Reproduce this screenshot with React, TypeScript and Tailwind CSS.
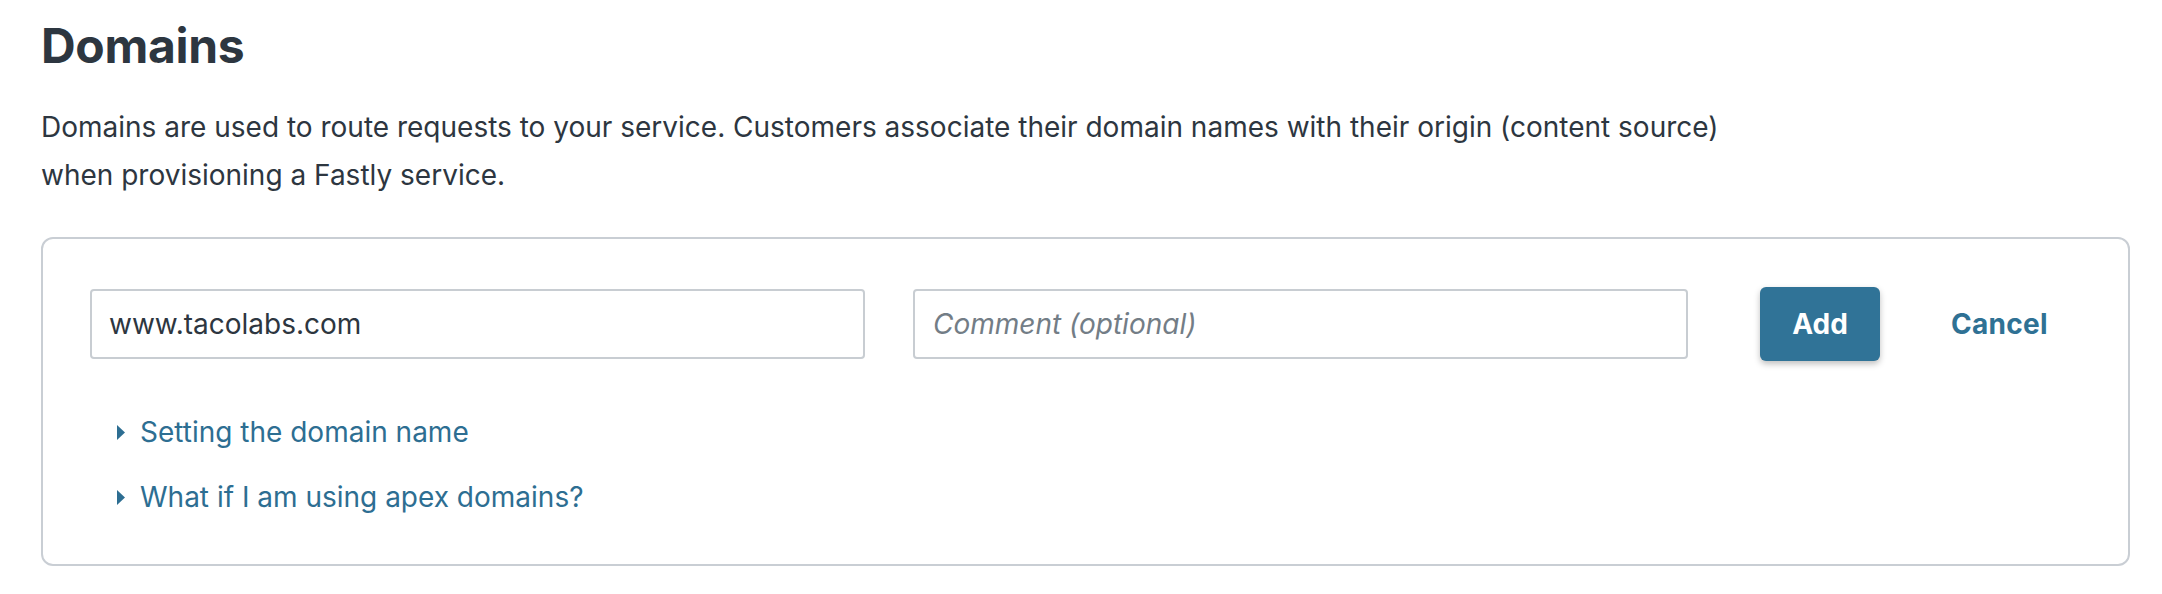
import React from "react";

function Caret() {
  return (
    <svg width="8" height="15" viewBox="0 0 8 15" className="shrink-0">
      <polygon points="0,0 8,7.5 0,15" fill="#2d6e92" />
    </svg>
  );
}

export default function App() {
  return (
    <div
      className="w-[2162px] h-[594px] bg-white pl-[41px] pr-[32px] pt-[22px] text-[#2d3640]"
      style={{ fontFamily: "Inter, 'Noto Sans', sans-serif" }}
    >
      <h1 className="text-[48px] leading-[48px] font-bold tracking-[-0.3px]">Domains</h1>
      <p className="mt-[33px] text-[28px] leading-[48px] w-[1900px]">
        Domains are used to route requests to your service. Customers associate their domain names with their origin (content source)
        <br />
        when provisioning a Fastly service.
      </p>
      <div className="mt-[38px] w-[2089px] border-2 border-[#c9ced4] rounded-[12px] pt-[48px] pb-[48px] pl-[47px]">
        <div className="flex items-center">
          <div className="w-[775px] h-[70px] border-2 border-[#c8cdd2] rounded-[4px] flex items-center pl-[17px] text-[28px]">
            www.tacolabs.com
          </div>
          <div className="ml-[48px] w-[775px] h-[70px] border-2 border-[#c8cdd2] rounded-[4px] flex items-center pl-[18px] text-[28px] italic text-[#737d86]">
            Comment (optional)
          </div>
          <button className="ml-[72px] w-[120px] h-[74px] rounded-[6px] bg-[#307397] text-white text-[28px] font-bold shadow-[0_3px_6px_rgba(0,0,0,0.25)]">
            Add
          </button>
          <span className="ml-[71px] text-[28px] font-bold tracking-[0.3px] text-[#2f7194]">Cancel</span>
        </div>
        <div className="mt-[52px] flex flex-col gap-[27px] text-[28px] leading-[38px] text-[#2d6e92]">
          <div className="flex items-center pl-[27px] gap-[15px]">
            <Caret />
            <span>Setting the domain name</span>
          </div>
          <div className="flex items-center pl-[27px] gap-[15px]">
            <Caret />
            <span>What if I am using apex domains?</span>
          </div>
        </div>
      </div>
    </div>
  );
}
